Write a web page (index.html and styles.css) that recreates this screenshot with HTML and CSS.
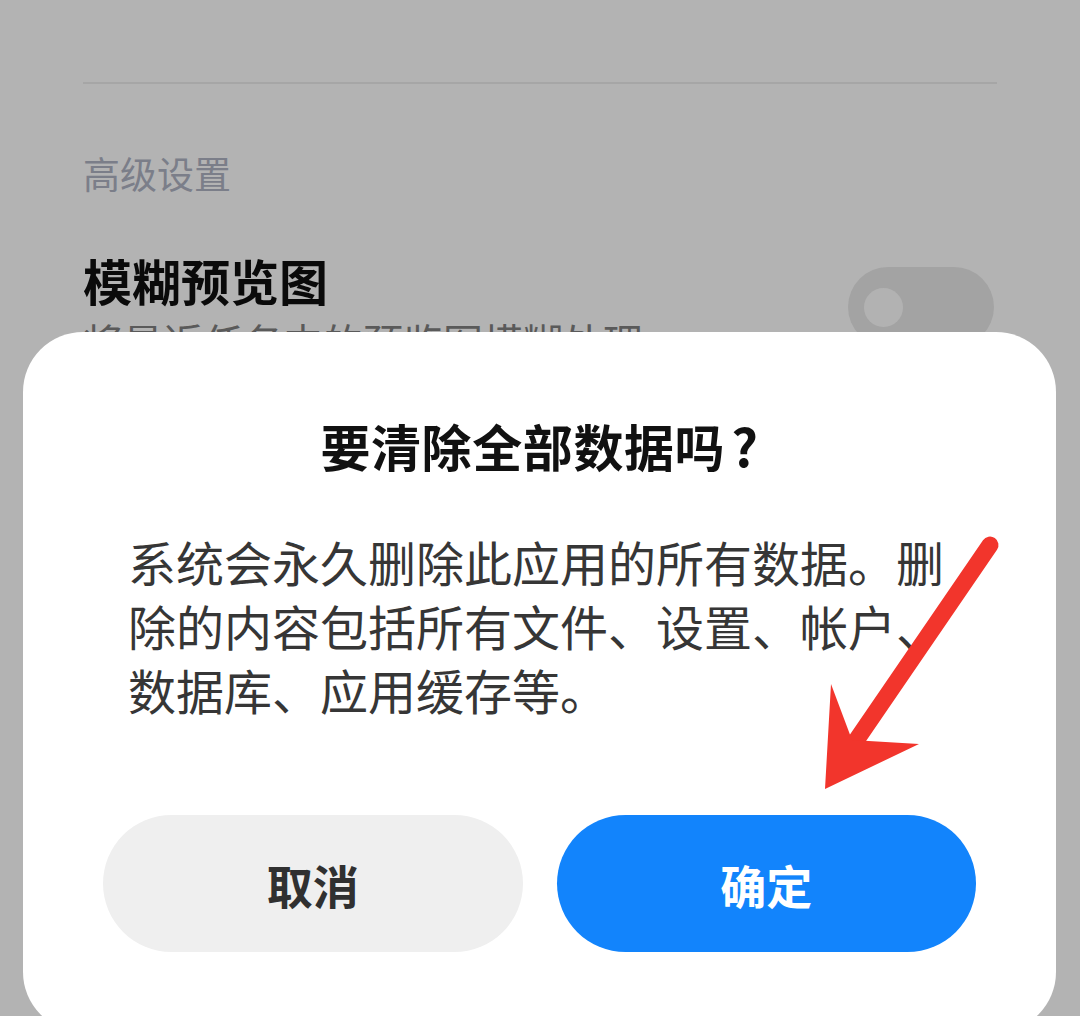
FILE: index.html
```html
<!DOCTYPE html>
<html lang="zh-CN">
<head>
<meta charset="utf-8">
<title>清除数据</title>
<link rel="stylesheet" href="styles.css">
</head>
<body>
  <main class="settings">
    <div class="divider"></div>
    <div class="group-label">高级设置</div>
    <div class="setting-row">
      <div class="setting-text">
        <div class="setting-title">模糊预览图</div>
        <div class="setting-desc">将最近任务中的预览图模糊处理</div>
      </div>
      <div class="switch"><span class="switch-knob"></span></div>
    </div>
  </main>

  <section class="dialog">
    <h1 class="dialog-title">要清除全部数据吗<span class="q">?</span></h1>
    <p class="dialog-body">系统会永久删除此应用的所有数据。删除的内容包括所有文件、设置、帐户、数据库、应用缓存等。</p>
    <div class="dialog-actions">
      <button class="btn btn-cancel">取消</button>
      <button class="btn btn-ok">确定</button>
    </div>
  </section>

  <svg class="pointer" viewBox="0 0 1080 1016" width="1080" height="1016" aria-hidden="true">
    <line x1="990" y1="545" x2="851" y2="748" stroke="#f2352c" stroke-width="17" stroke-linecap="round"/>
    <polygon points="825,789 831,684 852,740 919,744" fill="#f2352c"/>
  </svg>
</body>
</html>
```

FILE: styles.css
```css
html, body {
  margin: 0;
  padding: 0;
}

body {
  width: 1080px;
  height: 1016px;
  overflow: hidden;
  position: relative;
  background: #b3b3b3;
  font-family: "Noto Sans CJK SC", "Noto Sans", sans-serif;
}

/* settings list behind the dim layer */
.settings {
  padding: 82px 83px 0 83px;
}

.divider {
  height: 2px;
  background: #a6a6a6;
}

.group-label {
  margin-top: 71px;
  font-size: 37px;
  line-height: 37px;
  color: #7b7e89;
}

.setting-row {
  margin-top: 63px;
  display: flex;
  justify-content: space-between;
  align-items: flex-start;
}

.setting-title {
  font-size: 49px;
  line-height: 49px;
  font-weight: 700;
  color: #0a0a0a;
}

.setting-desc {
  margin-top: 17px;
  font-size: 40px;
  line-height: 40px;
  color: #5a5a5a;
}

.switch {
  margin-top: 12px;
  margin-right: 3px;
  width: 146px;
  height: 80px;
  border-radius: 40px;
  background: #a3a3a3;
  display: flex;
  align-items: center;
  padding-left: 16px;
  box-sizing: border-box;
}

.switch-knob {
  width: 39px;
  height: 39px;
  border-radius: 50%;
  background: #b2b2b2;
}

/* bottom sheet dialog */
.dialog {
  position: absolute;
  left: 23px;
  top: 332px;
  width: 1033px;
  height: 700px;
  box-sizing: border-box;
  background: #ffffff;
  border-radius: 60px;
  padding: 83px 80px 0 80px;
}

.dialog-title {
  margin: 0;
  text-align: center;
  font-size: 50px;
  line-height: 60px;
  font-weight: 700;
  color: #111111;
  letter-spacing: 0.6px;
}

.dialog-title .q {
  margin-left: 6px;
  font-size: 52px;
}

.dialog-body {
  margin: 54px 0 0 0;
  padding: 0 20px 0 25px;
  font-size: 48px;
  line-height: 64px;
  color: #363636;
}

.dialog-actions {
  margin-top: 94px;
  display: flex;
  gap: 34px;
}

.btn {
  flex: 1;
  height: 137px;
  border: none;
  border-radius: 69px;
  font-family: inherit;
  font-size: 46px;
  font-weight: 700;
  padding: 0;
}

.btn-cancel {
  background: #efefef;
  color: #303030;
}

.btn-ok {
  background: #1284fc;
  color: #ffffff;
}

/* annotation arrow drawn over the dialog */
.pointer {
  position: absolute;
  left: 0;
  top: 0;
  pointer-events: none;
}
```
